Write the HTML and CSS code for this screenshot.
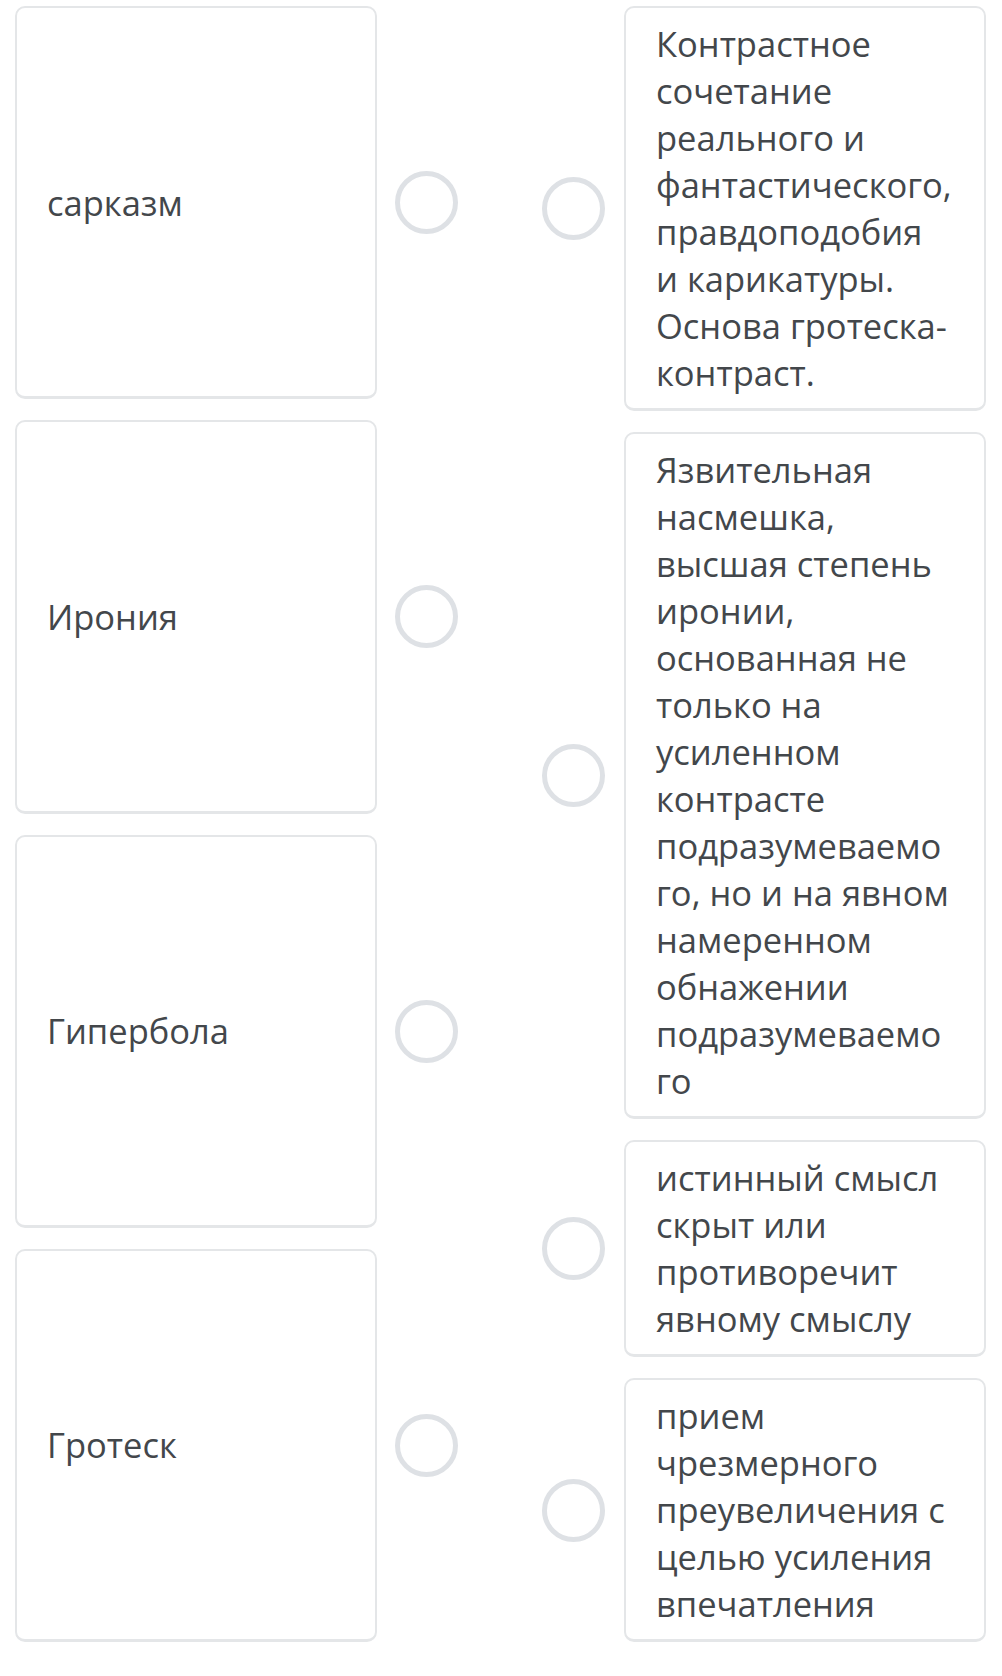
FILE: index.html
```html
<!DOCTYPE html>
<html lang="ru">
<head>
    <meta charset="UTF-8">
    <meta name="viewport" content="width=device-width, initial-scale=1.0">
    <title>Установите соответствие</title>
    <link rel="stylesheet" href="styles.css">
</head>
<body>

    <main class="match">
        <!-- Terms -->
        <div class="col col-left">
            <div class="row">
                <div class="card card-term">сарказм</div>
                <span class="dot"></span>
            </div>
            <div class="row">
                <div class="card card-term">Ирония</div>
                <span class="dot"></span>
            </div>
            <div class="row">
                <div class="card card-term">Гипербола</div>
                <span class="dot"></span>
            </div>
            <div class="row">
                <div class="card card-term">Гротеск</div>
                <span class="dot"></span>
            </div>
        </div>

        <!-- Definitions -->
        <div class="col col-right">
            <div class="row">
                <span class="dot"></span>
                <div class="card card-def">Контрастное<br>сочетание<br>реального и<br>фантастического,<br>правдоподобия<br>и карикатуры.<br>Основа гротеска-<br>контраст.</div>
            </div>
            <div class="row">
                <span class="dot"></span>
                <div class="card card-def">Язвительная<br>насмешка,<br>высшая степень<br>иронии,<br>основанная не<br>только на<br>усиленном<br>контрасте<br>подразумеваемо<br>го, но и на явном<br>намеренном<br>обнажении<br>подразумеваемо<br>го</div>
            </div>
            <div class="row">
                <span class="dot"></span>
                <div class="card card-def">истинный смысл<br>скрыт или<br>противоречит<br>явному смыслу</div>
            </div>
            <div class="row">
                <span class="dot"></span>
                <div class="card card-def">прием<br>чрезмерного<br>преувеличения с<br>целью усиления<br>впечатления</div>
            </div>
        </div>
    </main>

</body>
</html>
```

FILE: styles.css
```css
body {
    margin: 0;
    padding: 0;
    font-family: "Open Sans", "Noto Sans", sans-serif;
    color: #43474b;
    background-color: #fff;
}

.match {
    display: flex;
    justify-content: space-between;
    padding: 6px 16px 36px 15px;
}

.col {
    display: flex;
    flex-direction: column;
    gap: 21px;
}

.row {
    display: flex;
    align-items: center;
}

.col-left .row {
    flex: 1;
    gap: 18px;
}

.col-right .row {
    gap: 19px;
}

.card {
    width: 362px;
    box-sizing: border-box;
    border: 2px solid #e4e6e8;
    border-bottom-width: 3px;
    border-radius: 10px;
    background-color: #fff;
    padding: 12px 20px 12px 30px;
    font-size: 34.5px;
    line-height: 47px;
}

.card-term {
    align-self: stretch;
    display: flex;
    align-items: center;
}

.card-def {
    white-space: nowrap;
}

/* empty radio-like connector */
.dot {
    flex-shrink: 0;
    width: 63px;
    height: 63px;
    box-sizing: border-box;
    border: 5px solid #dee1e5;
    border-radius: 50%;
}
```
